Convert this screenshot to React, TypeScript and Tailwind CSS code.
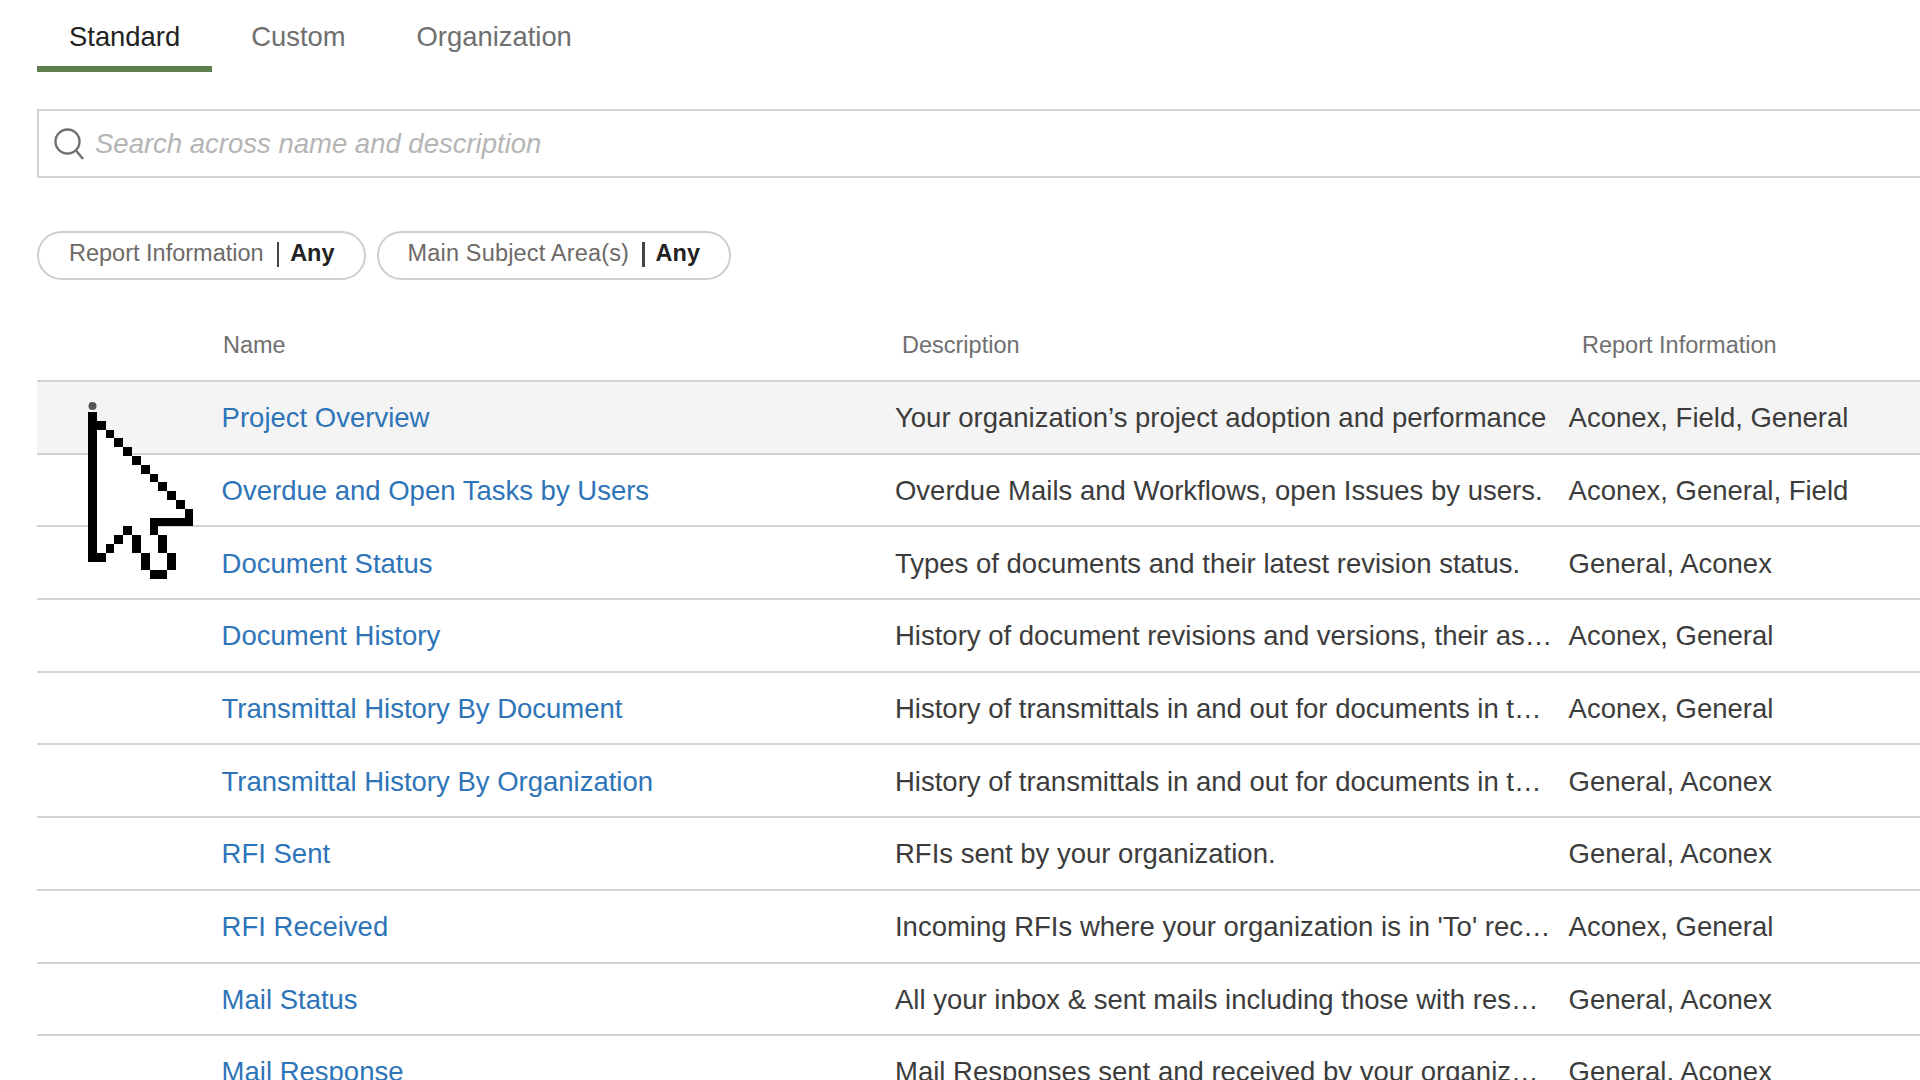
import { Fragment } from "react";

const rows = [
  { name: "Project Overview", description: "Your organization’s project adoption and performance", info: "Aconex, Field, General", active: true },
  { name: "Overdue and Open Tasks by Users", description: "Overdue Mails and Workflows, open Issues by users.", info: "Aconex, General, Field" },
  { name: "Document Status", description: "Types of documents and their latest revision status.", info: "General, Aconex" },
  { name: "Document History", description: "History of document revisions and versions, their as…", info: "Aconex, General" },
  { name: "Transmittal History By Document", description: "History of transmittals in and out for documents in t…", info: "Aconex, General" },
  { name: "Transmittal History By Organization", description: "History of transmittals in and out for documents in t…", info: "General, Aconex" },
  { name: "RFI Sent", description: "RFIs sent by your organization.", info: "General, Aconex" },
  { name: "RFI Received", description: "Incoming RFIs where your organization is in 'To' rec…", info: "Aconex, General" },
  { name: "Mail Status", description: "All your inbox & sent mails including those with res…", info: "General, Aconex" },
  { name: "Mail Response", description: "Mail Responses sent and received by your organiz…", info: "General, Aconex" },
];

// pixel art cursor, one entry per row: [black columns, white columns]
const cursorRows: [number[], number[]][] = [
  [[0], []],
  [[0, 1], []],
  [[0, 2], [1]],
  [[0, 3], [1, 2]],
  [[0, 4], [1, 2, 3]],
  [[0, 5], [1, 2, 3, 4]],
  [[0, 6], [1, 2, 3, 4, 5]],
  [[0, 7], [1, 2, 3, 4, 5, 6]],
  [[0, 8], [1, 2, 3, 4, 5, 6, 7]],
  [[0, 9], [1, 2, 3, 4, 5, 6, 7, 8]],
  [[0, 10], [1, 2, 3, 4, 5, 6, 7, 8, 9]],
  [[0, 11], [1, 2, 3, 4, 5, 6, 7, 8, 9, 10]],
  [[0, 7, 8, 9, 10, 11], [1, 2, 3, 4, 5, 6]],
  [[0, 4, 7], [1, 2, 3, 5, 6]],
  [[0, 3, 5, 8], [1, 2, 6, 7]],
  [[0, 2, 5, 8], [1, 6, 7]],
  [[0, 1, 6, 9], [7, 8]],
  [[6, 9], [7, 8]],
  [[7, 8], []],
];

function PixelCursor() {
  return (
    <div className="absolute left-[87.7px] top-[401.7px]">
      <div className="mb-[2.6px] h-[8px] w-[8px] translate-x-[0.5px] rounded-full bg-[#555555]" />
      <svg width="105.6" height="167.2" viewBox="0 0 12 19" shapeRendering="crispEdges" className="block">
        {cursorRows.map(([black, white], r) => (
          <Fragment key={r}>
            {white.map((c) => (
              <rect key={`w${c}`} x={c} y={r} width="1" height="1" fill="#ffffff" />
            ))}
            {black.map((c) => (
              <rect key={`b${c}`} x={c} y={r} width="1" height="1" fill="#000000" />
            ))}
          </Fragment>
        ))}
      </svg>
    </div>
  );
}

function Pill({ label, wide }: { label: string; wide?: boolean }) {
  return (
    <div className="flex h-[49px] items-center rounded-full border-2 border-[#cfcfcf] pl-[30px] pr-[29px] pb-[3px]">
      <span className={wide ? "-ml-[1px] tracking-[0.17px] text-[#6e6a67]" : "text-[#6e6a67]"}>{label}</span>
      <span className="ml-[13px] mr-[11px] h-[25px] w-[2.5px] bg-[#444444]" />
      <span className="font-bold text-[#222222]">Any</span>
    </div>
  );
}

export default function App() {
  return (
    <div className="relative h-[1080px] w-[1920px] overflow-hidden bg-white pl-[37px] font-['Liberation_Sans',Arial,sans-serif]">
      {/* Tabs */}
      <div className="flex h-[72px] gap-[7px] text-[27.4px]">
        <div className="border-b-[6px] border-[#5f7f4f] px-8 pt-[16px] text-[#222222]">Standard</div>
        <div className="px-8 pt-[16px] text-[#6f6f6f]">Custom</div>
        <div className="px-8 pt-[16px] text-[#6f6f6f]">Organization</div>
      </div>

      {/* Search */}
      <div className="mt-[37px] -mr-2 flex h-[69px] items-center border-2 border-[#d2d2d2] pl-[14px]">
        <svg width="32" height="32" viewBox="0 0 32 32" fill="none" stroke="#6f6f6f" strokeWidth="2.4" className="shrink-0">
          <circle cx="14.5" cy="13.5" r="12" />
          <path d="M23 22.5 L30 31" />
        </svg>
        <span className="ml-[10px] text-[27.5px] italic text-[#b5b5b5]">Search across name and description</span>
      </div>

      {/* Filters */}
      <div className="mt-[53px] flex gap-[11px] text-[23.5px]">
        <Pill label="Report Information" />
        <Pill label="Main Subject Area(s)" wide />
      </div>

      {/* Table header */}
      <div className="grid h-[102px] grid-cols-[186px_679px_680px_1fr] border-b-2 border-[#d2d2d2] pt-[48px] text-[23.5px] text-[#6f6f6f]">
        <div className="col-start-2">Name</div>
        <div>Description</div>
        <div>Report Information</div>
      </div>

      {/* Table rows */}
      {rows.map((row) => (
        <div
          key={row.name}
          className={`grid h-[72.7px] grid-cols-[184.6px_673.4px_673.6px_1fr] items-center border-b-2 border-[#d2d2d2] pt-[1px] text-[27.5px] whitespace-nowrap text-[#3c3c3c] ${
            row.active ? "bg-[#f4f4f4]" : ""
          }`}
        >
          <a href="#" className="col-start-2 text-[#2e74b8]">
            {row.name}
          </a>
          <div>{row.description}</div>
          <div>{row.info}</div>
        </div>
      ))}

      <PixelCursor />
    </div>
  );
}
